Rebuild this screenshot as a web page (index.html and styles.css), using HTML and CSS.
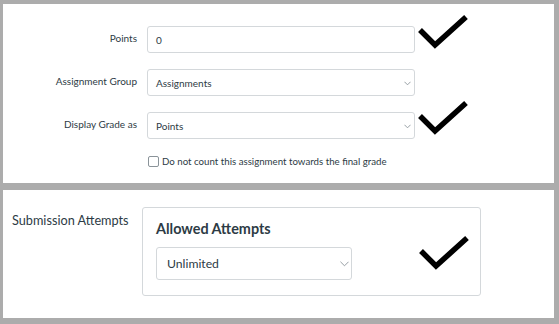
FILE: index.html
```html
<!DOCTYPE html>
<html lang="en">
<head>
    <meta charset="UTF-8">
    <meta name="viewport" content="width=device-width, initial-scale=1.0">
    <title>Assignment Settings</title>
    <link rel="stylesheet" href="styles.css">
</head>
<body>
    <div class="panel grading">
        <div class="row">
            <div class="label">Points</div>
            <div class="field">
                <div class="control">0</div>
                <svg class="mark" viewBox="0 0 50 36" width="50" height="36"><path d="M2 16 L17 31 L48 3"/></svg>
            </div>
        </div>
        <div class="row">
            <div class="label">Assignment Group</div>
            <div class="field">
                <div class="control select">Assignments
                    <svg class="chev" viewBox="0 0 8 5" width="7" height="5"><path d="M0.5 0.5 L4 4 L7.5 0.5"/></svg>
                </div>
            </div>
        </div>
        <div class="row">
            <div class="label">Display Grade as</div>
            <div class="field">
                <div class="control select">Points
                    <svg class="chev" viewBox="0 0 8 5" width="7" height="5"><path d="M0.5 0.5 L4 4 L7.5 0.5"/></svg>
                </div>
                <svg class="mark" viewBox="0 0 50 36" width="50" height="36"><path d="M2 16 L17 31 L48 3"/></svg>
            </div>
        </div>
        <div class="check-row">
            <span class="box"></span>
            <span>Do not count this assignment towards the final grade</span>
        </div>
    </div>

    <div class="panel attempts">
        <div class="side-label">Submission Attempts</div>
        <div class="attempts-box">
            <div class="attempts-title">Allowed Attempts</div>
            <div class="big-select">Unlimited
                <svg class="chev big" viewBox="0 0 10 6" width="9" height="6"><path d="M0.5 0.5 L5 5 L9.5 0.5"/></svg>
            </div>
            <svg class="mark big-mark" viewBox="0 0 50 36" width="50" height="36"><path d="M2 16 L17 31 L48 3"/></svg>
        </div>
    </div>
</body>
</html>
```

FILE: styles.css
```css
body {
    margin: 0;
    padding: 4px 5px 6px 3px;
    background: #acacac;
    font-family: Lato, "Noto Sans", sans-serif;
    color: #2d3b45;
    height: 324px;
    box-sizing: border-box;
}
.panel {
    background: white;
    box-sizing: border-box;
}
.grading {
    height: 179px;
    padding-top: 22px;
}
.row {
    display: flex;
    align-items: center;
    margin-bottom: 16px;
}
.label {
    width: 134px;
    text-align: right;
    font-size: 10px;
    margin-top: -3px;
}
.field {
    position: relative;
    margin-left: 10px;
}
.control {
    width: 268px;
    height: 27px;
    box-sizing: border-box;
    border: 1px solid #d4d8db;
    border-radius: 3px;
    padding: 0 8px;
    font-size: 10px;
    line-height: 27px;
    position: relative;
}
.select .chev {
    position: absolute;
    right: 3px;
    top: 11px;
}
.chev path {
    fill: none;
    stroke: #8a9399;
    stroke-width: 1;
}
.mark {
    position: absolute;
    left: 271px;
    bottom: 3px;
}
.mark path {
    fill: none;
    stroke: #000;
    stroke-width: 5.5;
}
.check-row {
    display: flex;
    align-items: center;
    margin-left: 145px;
    margin-top: 4px;
    font-size: 9.7px;
}
.box {
    width: 9px;
    height: 9px;
    border: 1px solid #8a9399;
    border-radius: 2px;
    margin-right: 3px;
}
.attempts {
    margin-top: 7px;
    height: 128px;
    padding: 17px 0 0 9px;
    display: flex;
    align-items: flex-start;
}
.side-label {
    width: 130px;
    font-size: 12.7px;
    margin-top: 5px;
}
.attempts-box {
    position: relative;
    width: 339px;
    height: 89px;
    box-sizing: border-box;
    border: 1px solid #d4d8db;
    border-radius: 3px;
    padding: 12px 0 0 13px;
}
.attempts-title {
    font-size: 14.4px;
    font-weight: bold;
    margin-bottom: 10px;
}
.big-select {
    position: relative;
    width: 196px;
    height: 33px;
    box-sizing: border-box;
    border: 1px solid #d4d8db;
    border-radius: 3px;
    padding: 0 10px;
    font-size: 12.2px;
    line-height: 31px;
}
.chev.big {
    position: absolute;
    right: 2px;
    top: 13px;
}
.big-mark {
    left: 276px;
    bottom: 24px;
}
```
